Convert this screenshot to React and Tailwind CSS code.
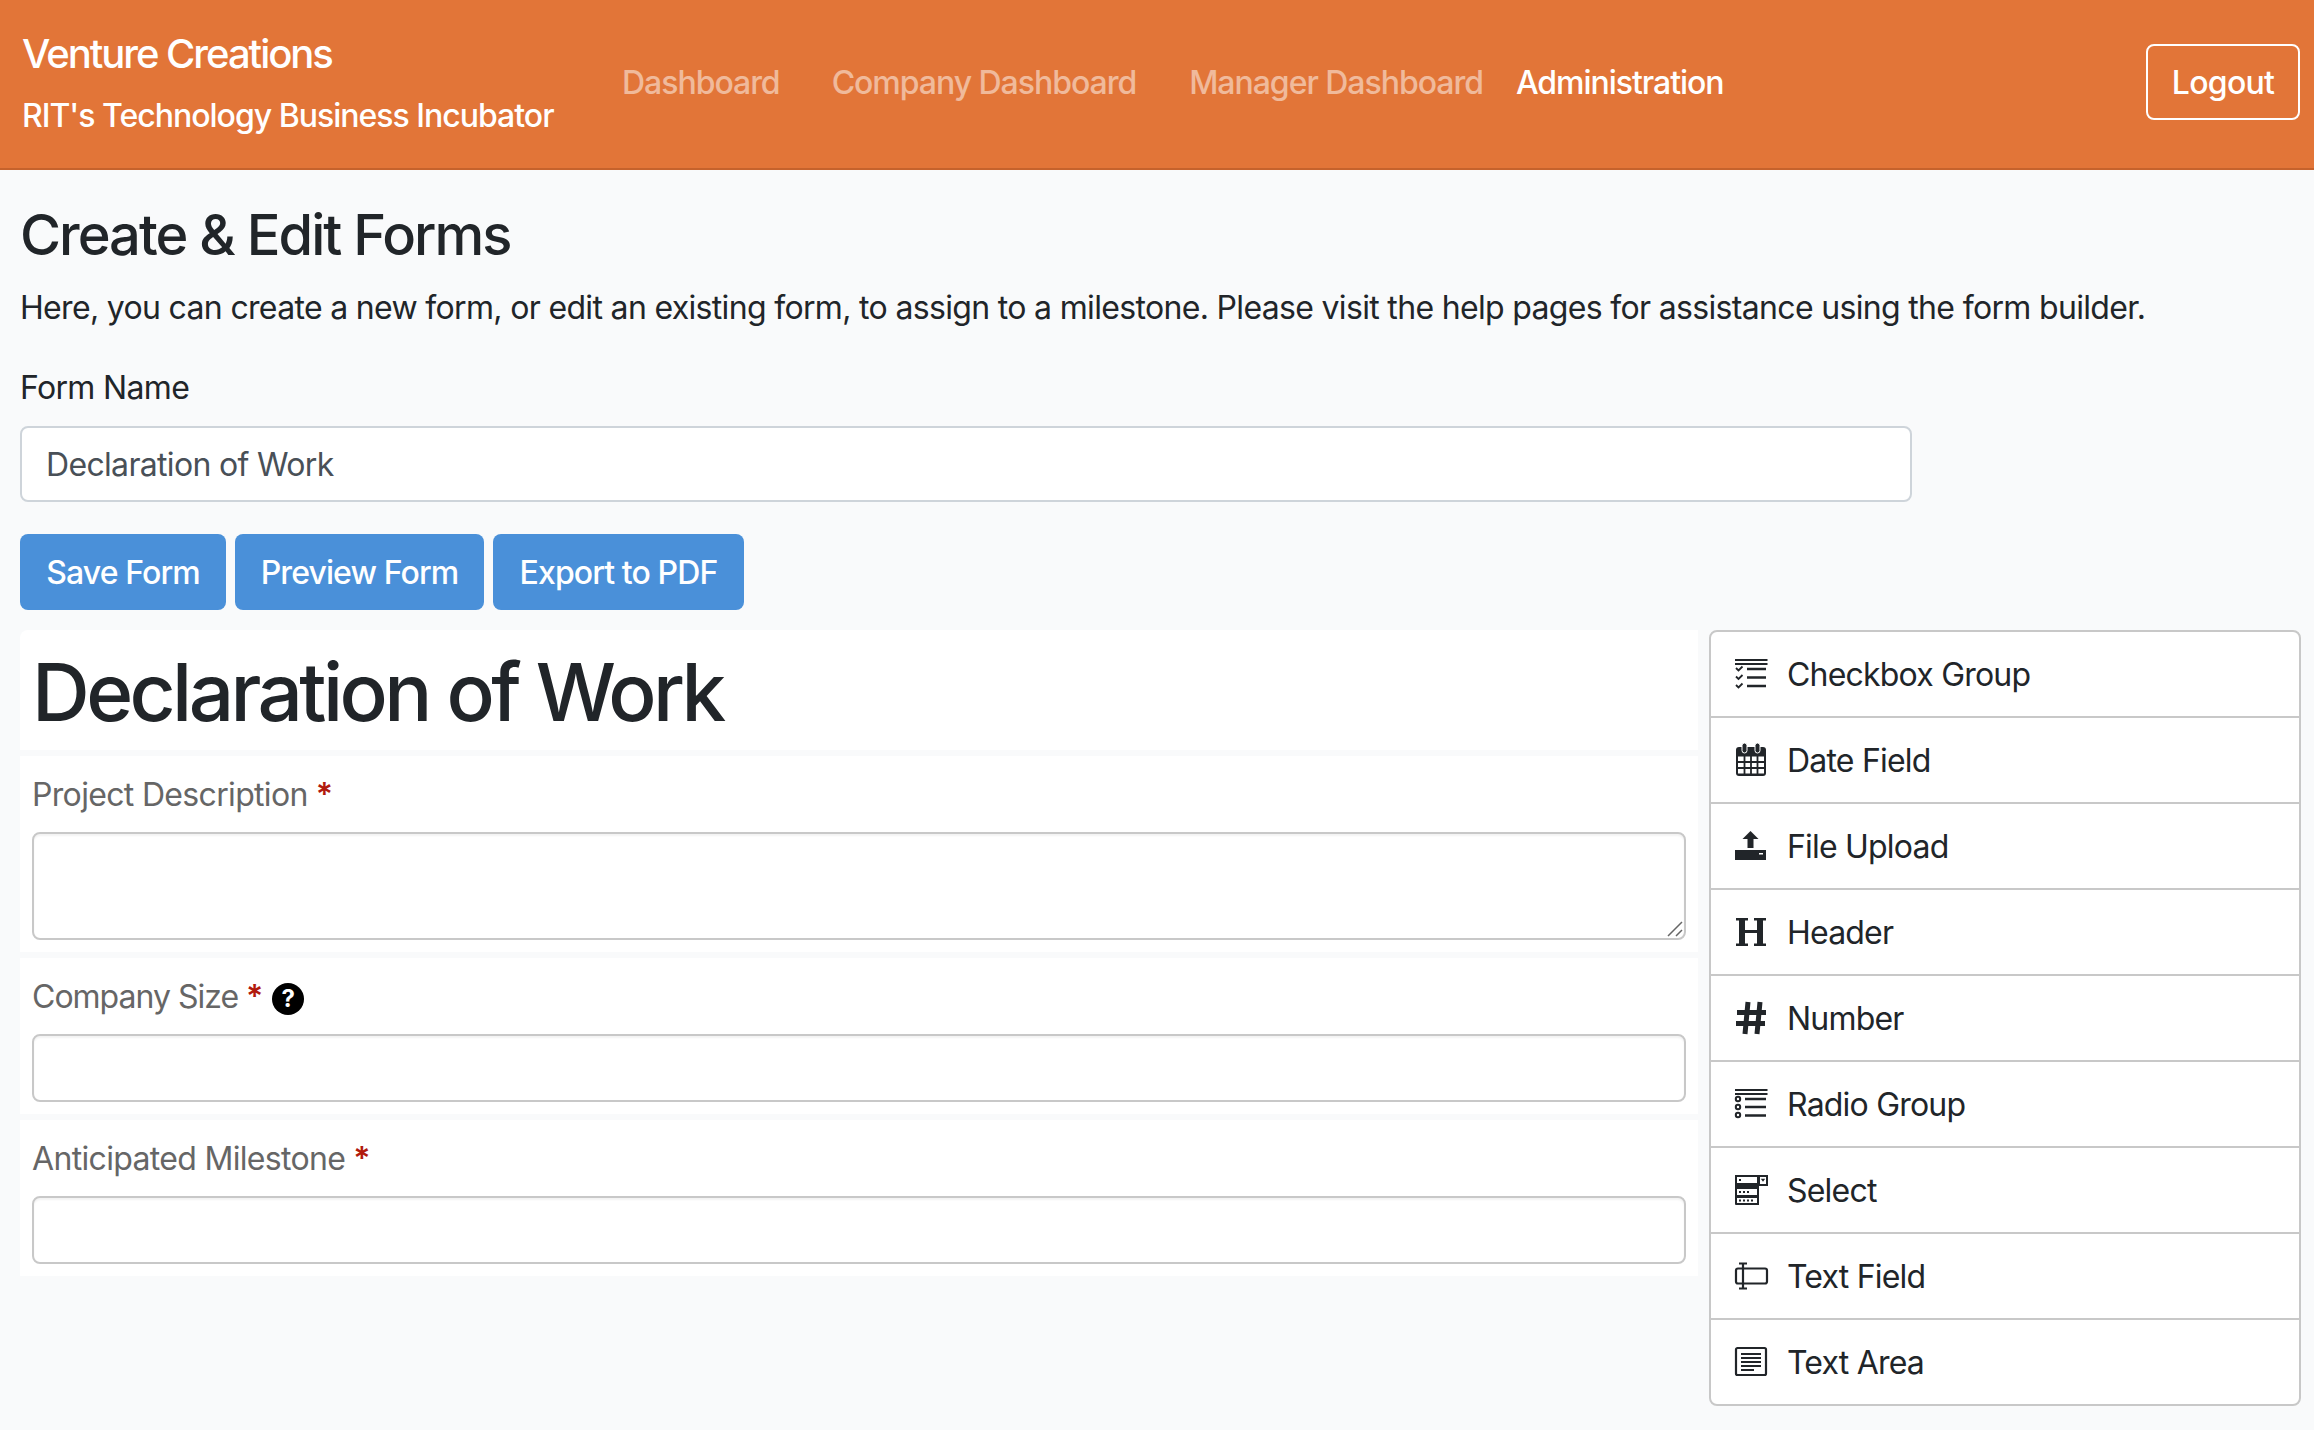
import React from 'react';

const ink = '#212529';
const iconClass = 'w-8 h-8 shrink-0 overflow-visible';

const CheckboxIcon = () => (
    <svg viewBox="0 0 32 32" className={iconClass} fill="none" stroke={ink}>
        <path d="M0 2h32.500M0 6h32.500" strokeWidth="2" />
        <path d="M12 11h19M12 19.500h19M12 28h19" strokeWidth="2.400" />
        <path d="M1 10l2.500 2.500 4-4M1 18.500l2.500 2.500 4-4M1 27l2.500 2.500 4-4" strokeWidth="1.800" />
    </svg>
);

const DateIcon = () => (
    <svg viewBox="0 0 32 32" className={iconClass}>
        <rect x="1" y="3" width="30" height="29" rx="3" fill={ink} />
        <rect x="7" y="-1" width="5" height="10" rx="2.500" fill={ink} stroke="#fff" strokeWidth="1" />
        <rect x="20" y="-1" width="5" height="10" rx="2.500" fill={ink} stroke="#fff" strokeWidth="1" />
        <path d="M3 12.500h26v17h-26z" fill="#fff" />
        <path d="M9.500 12v18M16 12v18M22.500 12v18M2 18h28M2 24h28" stroke={ink} strokeWidth="1.800" />
    </svg>
);

const UploadIcon = () => (
    <svg viewBox="0 0 32 32" className={iconClass} fill={ink}>
        <path d="M15.500 1l8 8h-5v9h-6v-9h-5z" />
        <rect x="0" y="20" width="31" height="10" />
        <rect x="24" y="23" width="4" height="1.500" fill="#fff" />
    </svg>
);

const HeaderIcon = () => (
    <svg viewBox="0 0 32 32" className={iconClass} fill={ink}>
        <path d="M1 2h12v2.500h-3v9.500h12v-9.500h-3v-2.500h12v2.500h-3v23h3v2.500h-12v-2.500h3v-10.500h-12v10.500h3v2.500h-12v-2.500h3v-23h-3z" />
    </svg>
);

const NumberIcon = () => (
    <svg viewBox="0 0 32 32" className={iconClass} fill="none" stroke={ink} strokeWidth="5">
        <path d="M13 0l-3 32M25 0l-3 32M2 10.500h29M1 21.500h29" />
    </svg>
);

const RadioIcon = () => (
    <svg viewBox="0 0 32 32" className={iconClass} fill="none" stroke={ink}>
        <path d="M0 2h32.500M0 6h32.500" strokeWidth="2" />
        <path d="M10 11h21M10 19h21M10 27.500h21" strokeWidth="2.400" />
        <circle cx="3" cy="11" r="2.200" strokeWidth="2" />
        <circle cx="3" cy="19" r="2.200" strokeWidth="2" />
        <circle cx="3" cy="27" r="2.200" strokeWidth="2" />
    </svg>
);

const SelectIcon = () => (
    <svg viewBox="0 0 32 32" className={iconClass}>
        <path d="M0 1h24v30h-23a1 1 0 0 1-1-1z" fill={ink} />
        <rect x="24" y="2" width="8" height="9" fill="#fff" stroke={ink} strokeWidth="2" />
        <path d="M25.800 4.800h4.400l-2.200 3z" fill={ink} />
        <rect x="2" y="3" width="20" height="6" fill="#fff" />
        <rect x="2" y="15" width="20" height="6" fill="#fff" />
        <rect x="2" y="24" width="20" height="5" fill="#fff" />
        <path d="M4 5h2v2h-2zM4 11h2v2h-2zM8 11h2v2h-2zM4 17h2v2h-2zM8 17h2v2h-2zM12 17h2v2h-2zM4 25.500h2v2h-2zM8 25.500h2v2h-2zM12 25.500h2v2h-2zM16 25.500h2v2h-2z" fill={ink} />
    </svg>
);

const TextFieldIcon = () => (
    <svg viewBox="0 0 32 32" className={iconClass} fill="none" stroke={ink} strokeWidth="2.200">
        <rect x="1" y="8.500" width="31" height="15" rx="2" />
        <path d="M8 4v24M4 3.500h8M4 28.500h8" />
    </svg>
);

const TextAreaIcon = () => (
    <svg viewBox="0 0 32 32" className={iconClass} fill="none" stroke={ink}>
        <rect x="1" y="2" width="30" height="27" rx="1.500" strokeWidth="2.200" />
        <path d="M6 8h20M6 12h20M6 16h20M6 20h20M6 24h13" strokeWidth="2" />
    </svg>
);

const fields = [
    ['Checkbox Group', CheckboxIcon],
    ['Date Field', DateIcon],
    ['File Upload', UploadIcon],
    ['Header', HeaderIcon],
    ['Number', NumberIcon],
    ['Radio Group', RadioIcon],
    ['Select', SelectIcon],
    ['Text Field', TextFieldIcon],
    ['Text Area', TextAreaIcon],
];

const Star = () => <span className="text-[#b11a0d] ml-2 font-semibold">*</span>;

const Navbar = () => (
    <nav className="h-[170px] bg-[#e27538] border-b-2 border-[#c5622c] flex items-center pl-[22px] pr-[14px]">
        <div className="text-white w-[600px] shrink-0 pb-1 font-[450]">
            <div className="text-[40px] leading-[60px] mb-2 tracking-[-2.030px]">Venture Creations</div>
            <div className="text-[32px] leading-[48px] tracking-[-1px]">RIT's Technology Business Incubator</div>
        </div>
        <div className="flex items-center text-[32px] leading-[48px] text-white/50 tracking-[-1.030px] font-[450] pb-[2px]">
            <a className="mr-[52px]">Dashboard</a>
            <a className="mr-[53px]">Company Dashboard</a>
            <a className="mr-[33px]">Manager Dashboard</a>
            <a className="text-white">Administration</a>
        </div>
        <button className="ml-auto mb-1 w-[154px] h-[76px] pt-[2px] border-2 border-white rounded-lg text-white text-[32px] leading-[48px] tracking-[-0.700px] font-[450]">Logout</button>
    </nav>
);

const BlueButton = ({ width, children }) => (
    <button className={`${width} h-[76px] pt-[2px] bg-[#4a90d9] text-white text-[32px] leading-[48px] rounded-lg tracking-[-0.900px] font-[450]`}>{children}</button>
);

const StageField = ({ label, help, children }) => (
    <div className="bg-white p-3">
        <div className={`flex items-center text-[32px] leading-[48px] text-[#666666] pt-[3px] mb-[13px] ${help ? 'tracking-[-1px]' : ''}`}>
            <span>{label}</span>
            <Star />
            {help && (
                <span className="ml-[10px] mt-[4px] w-8 h-8 rounded-full bg-black text-white text-[24px] leading-8 font-bold text-center tracking-normal">?</span>
            )}
        </div>
        {children}
    </div>
);

const inputClass = 'block w-full bg-white border-2 border-[#c8c8c8] rounded-lg outline-none shadow-[inset_0_2px_2px_rgba(0,0,0,0.05)]';

export default function App() {
    return (
        <div className="min-h-screen bg-[#f9fafb] text-[#212529] font-['Inter',sans-serif]">
            <Navbar />
            <main className="pl-5 pr-[13px] tracking-[-0.670px] font-[430]">
                <h3 className="pt-8 text-[56px] leading-[67px] font-[540] mb-[15px] tracking-[-2px]">Create &amp; Edit Forms</h3>
                <p className="text-[32px] leading-[48px] mb-8">Here, you can create a new form, or edit an existing form, to assign to a milestone. Please visit the help pages for assistance using the form builder.</p>
                <label className="block text-[32px] leading-[48px] mb-[14px]">Form Name</label>
                <input
                    readOnly
                    value="Declaration of Work"
                    className="block w-[1892px] h-[76px] px-6 bg-white border-2 border-[#ced4da] rounded-lg text-[32px] text-[#495057] outline-none mb-8"
                />
                <div className="flex gap-[9px] mb-5">
                    <BlueButton width="w-[206px]">Save Form</BlueButton>
                    <BlueButton width="w-[249px]">Preview Form</BlueButton>
                    <BlueButton width="w-[251px]">Export to PDF</BlueButton>
                </div>
                <div className="flex items-start">
                    <div className="w-[1678px] shrink-0 flex flex-col gap-[6px]">
                        <div className="bg-white p-3 rounded-tl-lg">
                            <h1 className="text-[80px] leading-[96px] font-[540] tracking-[-3.600px] pt-[2px] -mb-[2px]">Declaration of Work</h1>
                        </div>
                        <StageField label="Project Description">
                            <div className="relative">
                                <textarea readOnly className={`${inputClass} h-[108px] resize-none`} />
                                <svg viewBox="0 0 16 16" className="absolute right-[3px] bottom-[3px] w-4 h-4" fill="none" stroke="#666666" strokeWidth="1.500">
                                    <path d="M1 15L15 1M9 15l6-6" />
                                </svg>
                            </div>
                        </StageField>
                        <StageField label="Company Size" help>
                            <input readOnly className={`${inputClass} h-[68px]`} />
                        </StageField>
                        <StageField label="Anticipated Milestone">
                            <input readOnly className={`${inputClass} h-[68px]`} />
                        </StageField>
                    </div>
                    <ul className="ml-[11px] flex-1 bg-white border-2 border-[#c8c8c8] rounded-lg tracking-[-0.800px]">
                        {fields.map(([name, Icon], i) => (
                            <li key={name} className={`flex items-center gap-[20px] pl-6 text-[32px] ${i > 0 ? 'h-[86px] border-t-2 border-[#c8c8c8]' : 'h-[84px]'}`}>
                                <Icon />
                                <span className="pt-[2px]">{name}</span>
                            </li>
                        ))}
                    </ul>
                </div>
            </main>
        </div>
    );
}
